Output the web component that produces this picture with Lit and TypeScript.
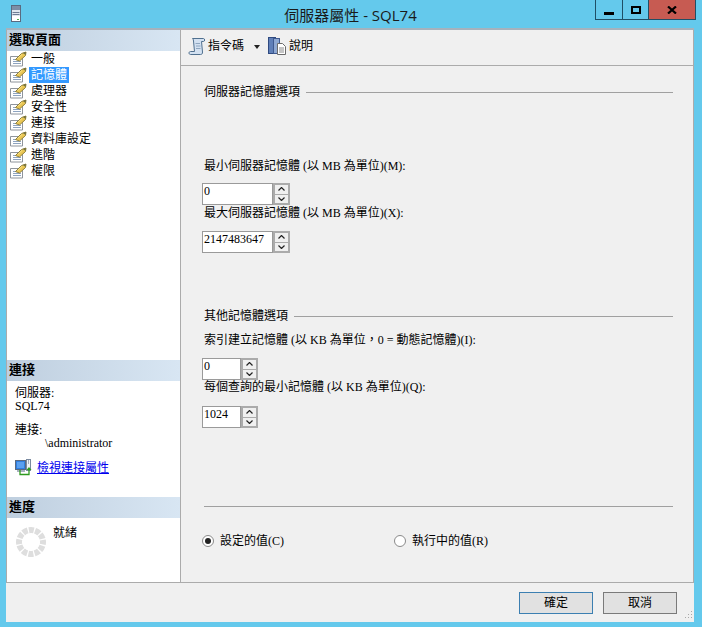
import { LitElement, html, css } from "lit";
import { customElement } from "lit/decorators.js";

const pageIcon = html`<svg class="ico" width="18" height="16" viewBox="0 0 18 16">
  <path d="M0.500 5.500h12v9.500h-12z" fill="#fff" stroke="#8f949b"/>
  <path d="M3 8.500h3M3 10.500h8M3 12.500h8" stroke="#8ea4c0"/>
  <path d="M5.500 8.500L11.500 2.500L16 1L15.500 4.500L9.500 10z" fill="#eac654" stroke="#8f7f3a"/>
  <path d="M7.500 7.500l4.500-4" stroke="#f8e48c"/>
  <path d="M13 2l3-1-.5 3z" fill="#6f7040"/>
</svg>`;

const serverIcon = html`<svg width="10" height="17" viewBox="0 0 10 17">
  <rect x="0.500" y="0.500" width="9" height="16" fill="#dfe6ee" stroke="#5a6a80"/>
  <rect x="1" y="1" width="8" height="4" fill="#7d8ea6"/>
  <path d="M1.500 7.500h7M1.500 9.500h7" stroke="#6d7d95"/>
  <rect x="1" y="11" width="8" height="5" fill="#fff"/>
  <rect x="6" y="14" width="2" height="1" fill="#4fae4f"/>
</svg>`;

const scriptIcon = html`<svg width="18" height="19" viewBox="0 0 18 19">
  <path d="M4.500 1.500H15.500C17 1.500 17 4.500 15.500 4.500H13.500L14.500 15C14.700 17 13.500 17.500 12.500 17.500H2.500C0.500 17.500 0.500 14.500 2.500 14.500H6.500L5.500 4C5.300 2.500 5 1.500 4.500 1.500Z" fill="#d3e1f1" stroke="#50708f"/>
  <path d="M7.500 6.500h4.500M8 9h4.500M8 11.500h4.500" stroke="#8ea6c0"/>
</svg>`;

const helpIcon = html`<svg width="18" height="18" viewBox="0 0 18 18">
  <rect x="0.500" y="0.500" width="7" height="16" fill="#5f7fb8" stroke="#2f4a80"/>
  <rect x="5.500" y="1.500" width="6" height="15" fill="#8ea8d2" stroke="#3f5a90"/>
  <path d="M9.500 6.500h5l3 3v8h-8z" fill="#fff" stroke="#6b6b6b"/>
  <path d="M11 11h5M11 13h5M11 15h5" stroke="#8a8a8a"/>
</svg>`;

const linkIcon = html`<svg width="17" height="17" viewBox="0 0 17 17">
  <rect x="0.500" y="1.500" width="10" height="9" fill="#2f7fe0" stroke="#5a6a80"/>
  <rect x="2" y="3" width="7" height="6" fill="#5aa0f0"/>
  <rect x="2" y="11" width="8" height="2" fill="#a8b2c0"/>
  <rect x="11.500" y="0.500" width="4" height="11" fill="#eef2f6" stroke="#7a8aa0"/>
  <path d="M13 2h1M13 4h1" stroke="#5a6a80"/>
  <path d="M5 11v4.500h9V11" fill="none" stroke="#2e9a1e" stroke-width="1.300"/>
  <path d="M11.500 11l2.500-3 2.500 3z" fill="#2e9a1e"/>
</svg>`;

const busyIcon = html`<svg width="30" height="30" viewBox="0 0 30 30">
  <circle cx="15" cy="15" r="12" fill="none" stroke="#dedede" stroke-width="6" stroke-dasharray="5 1.283" stroke-dashoffset="2.500"/>
</svg>`;

const chevUp = html`<svg width="7" height="4" viewBox="0 0 7 4"><path d="M0.500 3.500l3-3 3 3" fill="none" stroke="#222" stroke-width="1.200"/></svg>`;
const chevDown = html`<svg width="7" height="4" viewBox="0 0 7 4"><path d="M0.500 0.500l3 3 3-3" fill="none" stroke="#222" stroke-width="1.200"/></svg>`;

const PAGES = ["一般", "記憶體", "處理器", "安全性", "連接", "資料庫設定", "進階", "權限"];

@customElement("app-root")
export class AppRoot extends LitElement {
  static styles = css`
    :host {
      display: block;
      width: 702px;
      height: 627px;
      overflow: hidden;
      font-family: "Liberation Serif", "Noto Sans CJK TC", serif;
      font-size: 12px;
      line-height: 14px;
      color: #000;
    }
    * { box-sizing: border-box; }
    .window {
      width: 702px;
      height: 627px;
      background: #64c9ec;
      display: flex;
      flex-direction: column;
    }
    .titlebar {
      height: 28px;
      display: flex;
      align-items: flex-start;
      flex: none;
    }
    .app-icon { width: 25px; padding: 5px 0 0 11px; display: flex; }
    .title {
      flex: none;
      width: 570px;
      padding: 6px 0 0 81px;
      text-align: center;
      font-family: "Open Sans", "Noto Sans CJK TC", sans-serif;
      font-size: 15px;
      line-height: 18px;
      color: #1a1a1a;
    }
    .controls {
      display: flex;
      height: 20px;
      border: 1px solid #1f4f66;
      border-top: 0;
    }
    .ctl {
      display: flex;
      align-items: center;
      justify-content: center;
    }
    .ctl.min { width: 27px; border-right: 1px solid #1f4f66; }
    .ctl.max { width: 26px; border-right: 1px solid #1f4f66; }
    .ctl.close { width: 46px; background: #c75b52; border-right: 0; }
    .client {
      position: relative;
      width: 688px;
      height: 594px;
      margin-left: 6px;
      background: #f0f0f0;
      border-top: 2px solid #a5b2bd;
      display: flex;
      flex-direction: column;
    }
    .main {
      height: 553px;
      display: flex;
      flex: none;
      border-bottom: 1px solid #ababab;
    }
    .left {
      width: 175px;
      flex: none;
      background: #fff;
      border-left: 1px solid #ababab;
      border-right: 1px solid #ababab;
      display: flex;
      flex-direction: column;
    }
    .sec-pages { height: 330px; }
    .sec-conn { height: 137px; }
    .sec-prog { flex: 1; }
    .sec-head {
      height: 21px;
      padding: 2px 0 0 2px;
      font-size: 13px;
      line-height: 16px;
      font-weight: 700;
      background: linear-gradient(90deg, #bfcfdf, #d8e6f3);
    }
    .pages { display: flex; flex-direction: column; }
    .page {
      height: 16px;
      display: flex;
      align-items: center;
      padding-left: 3px;
    }
    .ico { flex: none; }
    .page span {
      margin-left: 1px;
      padding: 1px 2px;
      line-height: 14px;
    }
    .page.sel span { background: #3399ff; color: #fff; }
    .conn-body {
      padding: 6px 0 0 8px;
      display: flex;
      flex-direction: column;
    }
    .conn-line { height: 13px; line-height: 13px; }
    .conn-user { padding-left: 30px; }
    .gap { height: 11px; }
    .conn-link {
      margin-top: 9px;
      display: flex;
      align-items: center;
      gap: 5px;
    }
    a { color: #0000ee; text-decoration: underline; }
    .prog-body {
      display: flex;
      padding: 9px 0 0 9px;
      gap: 7px;
    }
    .prog-body span { line-height: 10px; padding-top: 1px; }
    .right {
      flex: 1;
      display: flex;
      flex-direction: column;
      border-right: 1px solid #ababab;
    }
    .toolbar {
      height: 36px;
      flex: none;
      border-bottom: 1px solid #ababab;
      display: flex;
      align-items: center;
      padding: 0 0 3px 7px;
    }
    .toolbar .t1 { margin-left: 2px; }
    .arrow-down {
      width: 0;
      height: 0;
      margin: 2px 8px 0 10px;
      border-left: 3.500px solid transparent;
      border-right: 3.500px solid transparent;
      border-top: 4px solid #222;
    }
    .toolbar .t2 { margin-left: 3px; }
    .content {
      flex: 1;
      display: flex;
      flex-direction: column;
      align-items: flex-start;
      padding: 19px 20px 0 21px;
    }
    .group {
      width: 100%;
      height: 14px;
      padding-left: 2px;
      display: flex;
      align-items: center;
      gap: 6px;
    }
    .group i {
      flex: 1;
      height: 1px;
      background: #a0a0a0;
    }
    .label { height: 14px; padding-left: 2px; white-space: nowrap; }
    .spin { height: 22px; display: flex; flex: none; }
    .spin.wide { width: 88px; }
    .spin.narrow { width: 56px; }
    .field {
      flex: 1;
      background: #fff;
      border: 1px solid #9a9a9a;
      padding: 0 0 0 1px;
      font-size: 12px;
      line-height: 14px;
    }
    .arrows {
      width: 17px;
      flex: none;
      background: #ababab;
      padding: 2px;
      display: flex;
      flex-direction: column;
      gap: 1px;
    }
    .arrows b {
      flex: 1;
      background: #f0f0f0;
      display: flex;
      align-items: center;
      justify-content: center;
    }
    .divider { width: 100%; padding: 0 0 0 2px; }
    .divider i { display: block; height: 1px; background: #a0a0a0; }
    .radios {
      display: flex;
      margin-top: 27px;
      height: 14px;
      align-items: center;
    }
    .radio { display: flex; align-items: center; gap: 6px; }
    .radio.one { width: 192px; }
    .dot {
      width: 12px;
      height: 12px;
      border-radius: 50%;
      border: 1px solid #8a8a8a;
      background: #fff;
      display: flex;
      align-items: center;
      justify-content: center;
    }
    .dot u { width: 6px; height: 6px; border-radius: 50%; background: #222; }
    .footer {
      flex: 1;
      display: flex;
      justify-content: flex-end;
      gap: 10px;
      padding: 9px 17px 0 0;
    }
    .btn {
      width: 74px;
      height: 22px;
      background: #e1e1e1;
      border: 1px solid #7a7a7a;
      display: flex;
      align-items: center;
      justify-content: center;
    }
    .btn.def { border-color: #3c7fb1; }
    .grip {
      position: absolute;
      right: 1px;
      bottom: 1px;
      display: flex;
    }
    .m60 { margin-top: 60px; }
    .m10 { margin-top: 10px; }
    .m11 { margin-top: 11px; }
    .m1 { margin-top: 1px; }
    .m0 { margin-top: 0; }
    .m12 { margin-top: 12px; }
    .m56 { margin-top: 56px; }
    .m78 { margin-top: 78px; }
  `;

  private spinner(value: string, size: string, cls: string) {
    return html`<div class="spin ${size} ${cls}">
      <div class="field">${value}</div>
      <div class="arrows"><b>${chevUp}</b><b>${chevDown}</b></div>
    </div>`;
  }

  render() {
    return html`<div class="window">
      <div class="titlebar">
        <div class="app-icon">${serverIcon}</div>
        <div class="title">伺服器屬性 - SQL74</div>
        <div class="controls">
          <div class="ctl min"><svg width="10" height="10" viewBox="0 0 10 10"><rect y="7" width="10" height="3" fill="#000"/></svg></div>
          <div class="ctl max"><svg width="10" height="8" viewBox="0 0 10 8"><rect x="1" y="1" width="8" height="6" fill="none" stroke="#000" stroke-width="2"/></svg></div>
          <div class="ctl close"><svg width="10" height="8" viewBox="0 0 10 8"><path d="M1 0.500l8 7M9 0.500l-8 7" stroke="#000" stroke-width="2.200"/></svg></div>
        </div>
      </div>
      <div class="client">
        <div class="main">
          <div class="left">
            <div class="sec-pages">
              <div class="sec-head">選取頁面</div>
              <div class="pages">
                ${PAGES.map((p, i) => html`<div class="page ${i === 1 ? "sel" : ""}">${pageIcon}<span>${p}</span></div>`)}
              </div>
            </div>
            <div class="sec-conn">
              <div class="sec-head">連接</div>
              <div class="conn-body">
                <div class="conn-line">伺服器:</div>
                <div class="conn-line">SQL74</div>
                <div class="gap"></div>
                <div class="conn-line">連接:</div>
                <div class="conn-line conn-user">\\administrator</div>
                <div class="conn-link">${linkIcon}<a>檢視連接屬性</a></div>
              </div>
            </div>
            <div class="sec-prog">
              <div class="sec-head">進度</div>
              <div class="prog-body">${busyIcon}<span>就緒</span></div>
            </div>
          </div>
          <div class="right">
            <div class="toolbar">
              ${scriptIcon}<span class="t1">指令碼</span><span class="arrow-down"></span>${helpIcon}<span class="t2">說明</span>
            </div>
            <div class="content">
              <div class="group"><span>伺服器記憶體選項</span><i></i></div>
              <div class="label m60">最小伺服器記憶體 (以 MB 為單位)(M):</div>
              ${this.spinner("0", "wide", "m10")}
              <div class="label m1">最大伺服器記憶體 (以 MB 為單位)(X):</div>
              ${this.spinner("2147483647", "wide", "m11")}
              <div class="group m56"><span>其他記憶體選項</span><i></i></div>
              <div class="label m10">索引建立記憶體 (以 KB 為單位\uFF0C0 = 動態記憶體)(I):</div>
              ${this.spinner("0", "narrow", "m11")}
              <div class="label m0">每個查詢的最小記憶體 (以 KB 為單位)(Q):</div>
              ${this.spinner("1024", "narrow", "m12")}
              <div class="divider m78"><i></i></div>
              <div class="radios">
                <div class="radio one"><span class="dot"><u></u></span><span>設定的值(C)</span></div>
                <div class="radio"><span class="dot"></span><span>執行中的值(R)</span></div>
              </div>
            </div>
          </div>
        </div>
        <div class="footer">
          <div class="btn def">確定</div>
          <div class="btn">取消</div>
        </div>
        <div class="grip"><svg width="10" height="10" viewBox="0 0 10 10" fill="#a8a8a8"><rect x="8" y="0" width="1" height="1"/><rect x="5" y="3" width="1" height="1"/><rect x="8" y="3" width="1" height="1"/><rect x="2" y="6" width="1" height="1"/><rect x="5" y="6" width="1" height="1"/><rect x="8" y="6" width="1" height="1"/></svg></div>
      </div>
    </div>`;
  }
}
